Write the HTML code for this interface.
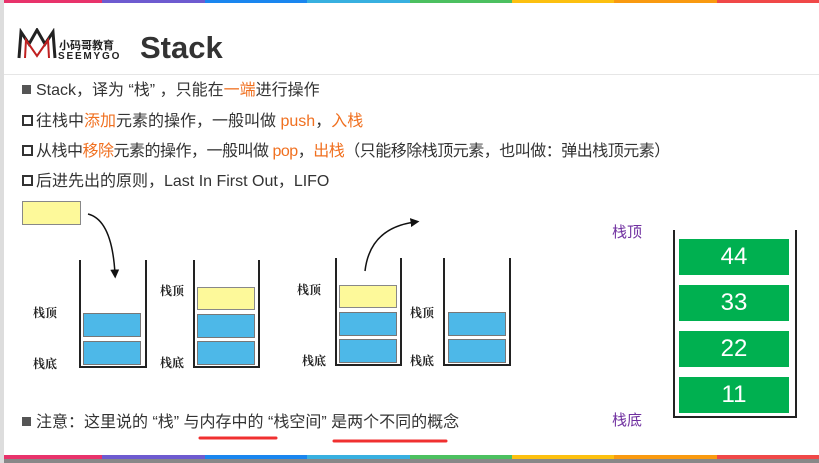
<!DOCTYPE html>
<html><head><meta charset="utf-8"><style>
body{margin:0;width:819px;height:463px;overflow:hidden;background:#fff;position:relative;font-family:"Liberation Sans","Noto Sans CJK SC",sans-serif;}
.a{position:absolute}
.bar{position:absolute;left:0;width:819px;height:3px;display:flex}
.bar div{flex:1}
.t{position:absolute;left:22px;font-size:16px;color:#333;white-space:nowrap;line-height:20px}
.o{color:#f07020}
.sq{display:inline-block;width:9px;height:9px;background:#555;margin-right:5px;vertical-align:1px}
.hs{display:inline-block;width:7px;height:7px;border:2px solid #333;margin-right:3px;vertical-align:0}
.c{position:absolute;border:2px solid #222;border-top:none}
.y{position:absolute;background:#fdf99a;border:1px solid #888}
.b{position:absolute;background:#4db8e8;border:1px solid #777}
.l{position:absolute;font-size:12px;font-weight:bold;color:#222;font-family:"Liberation Serif","Noto Serif CJK SC",serif}
.g{position:absolute;left:679px;width:110px;height:36px;background:#00b050;color:#fff;font-size:24px;text-align:center;line-height:36px}
.p{position:absolute;color:#7030a0;font-size:15px}
</style></head><body>
<div class="bar" style="top:0"><div style="background:#e8336b"></div><div style="background:#6e5bd0"></div><div style="background:#1a86ef"></div><div style="background:#38b0e0"></div><div style="background:#4cc060"></div><div style="background:#fcc010"></div><div style="background:#f99a10"></div><div style="background:#f04848"></div></div>
<div class="bar" style="top:455px;height:4px"><div style="background:#e8336b"></div><div style="background:#6e5bd0"></div><div style="background:#1a86ef"></div><div style="background:#38b0e0"></div><div style="background:#4cc060"></div><div style="background:#fcc010"></div><div style="background:#f99a10"></div><div style="background:#f04848"></div></div>
<div class="a" style="top:459px;left:0;width:819px;height:4px;background:#888"></div>
<div class="a" style="top:0;left:0;width:4px;height:463px;background:#ddd"></div>
<div class="a" style="top:74px;left:4px;width:815px;height:1px;background:#e6e6e6"></div>
<svg class="a" style="left:17px;top:28px" width="40" height="32"><path d="M2 30 L4 4 L12 16 L20 2 L28 16 L36 4 L38 30" fill="none" stroke="#222" stroke-width="3"/><path d="M8 30 L9 12 L20 28 L31 12 L32 30" fill="none" stroke="#c02020" stroke-width="2"/></svg>
<div class="a" style="left:59px;top:37px;font-size:11px;font-weight:bold;color:#222">小码哥教育</div>
<div class="a" style="left:58px;top:51px;font-size:10px;font-weight:bold;color:#222;letter-spacing:1.8px">SEEMYGO</div>
<div class="a" style="left:140px;top:30px;font-size:31px;font-weight:bold;color:#333">Stack</div>
<div class="t" style="top:81px"><span class="sq"></span>Stack，译为 “栈” ，只能在<span class="o">一端</span>进行操作</div>
<div class="t" style="top:112px"><span class="hs"></span>往栈中<span class="o">添加</span>元素的操作，一般叫做 <span class="o">push</span>，<span class="o">入栈</span></div>
<div class="t" style="top:142px;letter-spacing:-0.5px"><span class="hs"></span>从栈中<span class="o">移除</span>元素的操作，一般叫做 <span class="o">pop</span>，<span class="o">出栈</span>（只能移除栈顶元素，也叫做：弹出栈顶元素）</div>
<div class="t" style="top:172px"><span class="hs"></span>后进先出的原则，Last In First Out，LIFO</div>
<div class="y" style="left:22px;top:201px;width:57px;height:22px"></div>
<div class="c" style="left:79px;top:260px;width:64px;height:106px"></div>
<div class="b" style="left:83px;top:313px;width:56px;height:22px"></div>
<div class="b" style="left:83px;top:341px;width:56px;height:22px"></div>
<div class="c" style="left:193px;top:260px;width:63px;height:106px"></div>
<div class="y" style="left:197px;top:287px;width:56px;height:21px"></div>
<div class="b" style="left:197px;top:314px;width:56px;height:22px"></div>
<div class="b" style="left:197px;top:341px;width:56px;height:22px"></div>
<div class="c" style="left:335px;top:258px;width:63px;height:106px"></div>
<div class="y" style="left:339px;top:285px;width:56px;height:21px"></div>
<div class="b" style="left:339px;top:312px;width:56px;height:22px"></div>
<div class="b" style="left:339px;top:339px;width:56px;height:22px"></div>
<div class="c" style="left:443px;top:258px;width:64px;height:106px"></div>
<div class="b" style="left:448px;top:312px;width:56px;height:22px"></div>
<div class="b" style="left:448px;top:339px;width:56px;height:22px"></div>
<div class="l" style="left:33px;top:304px">栈顶</div><div class="l" style="left:33px;top:355px">栈底</div>
<div class="l" style="left:160px;top:282px">栈顶</div><div class="l" style="left:160px;top:354px">栈底</div>
<div class="l" style="left:297px;top:281px">栈顶</div><div class="l" style="left:302px;top:352px">栈底</div>
<div class="l" style="left:410px;top:304px">栈顶</div><div class="l" style="left:410px;top:352px">栈底</div>
<svg class="a" style="left:0;top:0" width="819" height="463"><defs><marker id="m" markerWidth="6" markerHeight="6" refX="3" refY="3" orient="auto"><path d="M0 0L6 3L0 6z" fill="#111"/></marker></defs>
<path d="M88 214 Q112 220 115 274" fill="none" stroke="#111" stroke-width="1.5" marker-end="url(#m)"/>
<path d="M365 271 Q370 228 415 222" fill="none" stroke="#111" stroke-width="1.5" marker-end="url(#m)"/>
<path d="M200 438 L276 438" stroke="#f03030" stroke-width="3" stroke-linecap="round"/>
<path d="M334 441 L446 441" stroke="#f03030" stroke-width="3" stroke-linecap="round"/>
</svg>
<div class="t" style="top:413px"><span class="sq"></span>注意：这里说的 “栈” 与内存中的 “栈空间” 是两个不同的概念</div>
<div class="c" style="left:673px;top:230px;width:120px;height:186px"></div>
<div class="g" style="top:239px">44</div><div class="g" style="top:285px">33</div><div class="g" style="top:331px">22</div><div class="g" style="top:377px">11</div>
<div class="p" style="left:612px;top:221px">栈顶</div><div class="p" style="left:612px;top:409px">栈底</div>
</body></html>
